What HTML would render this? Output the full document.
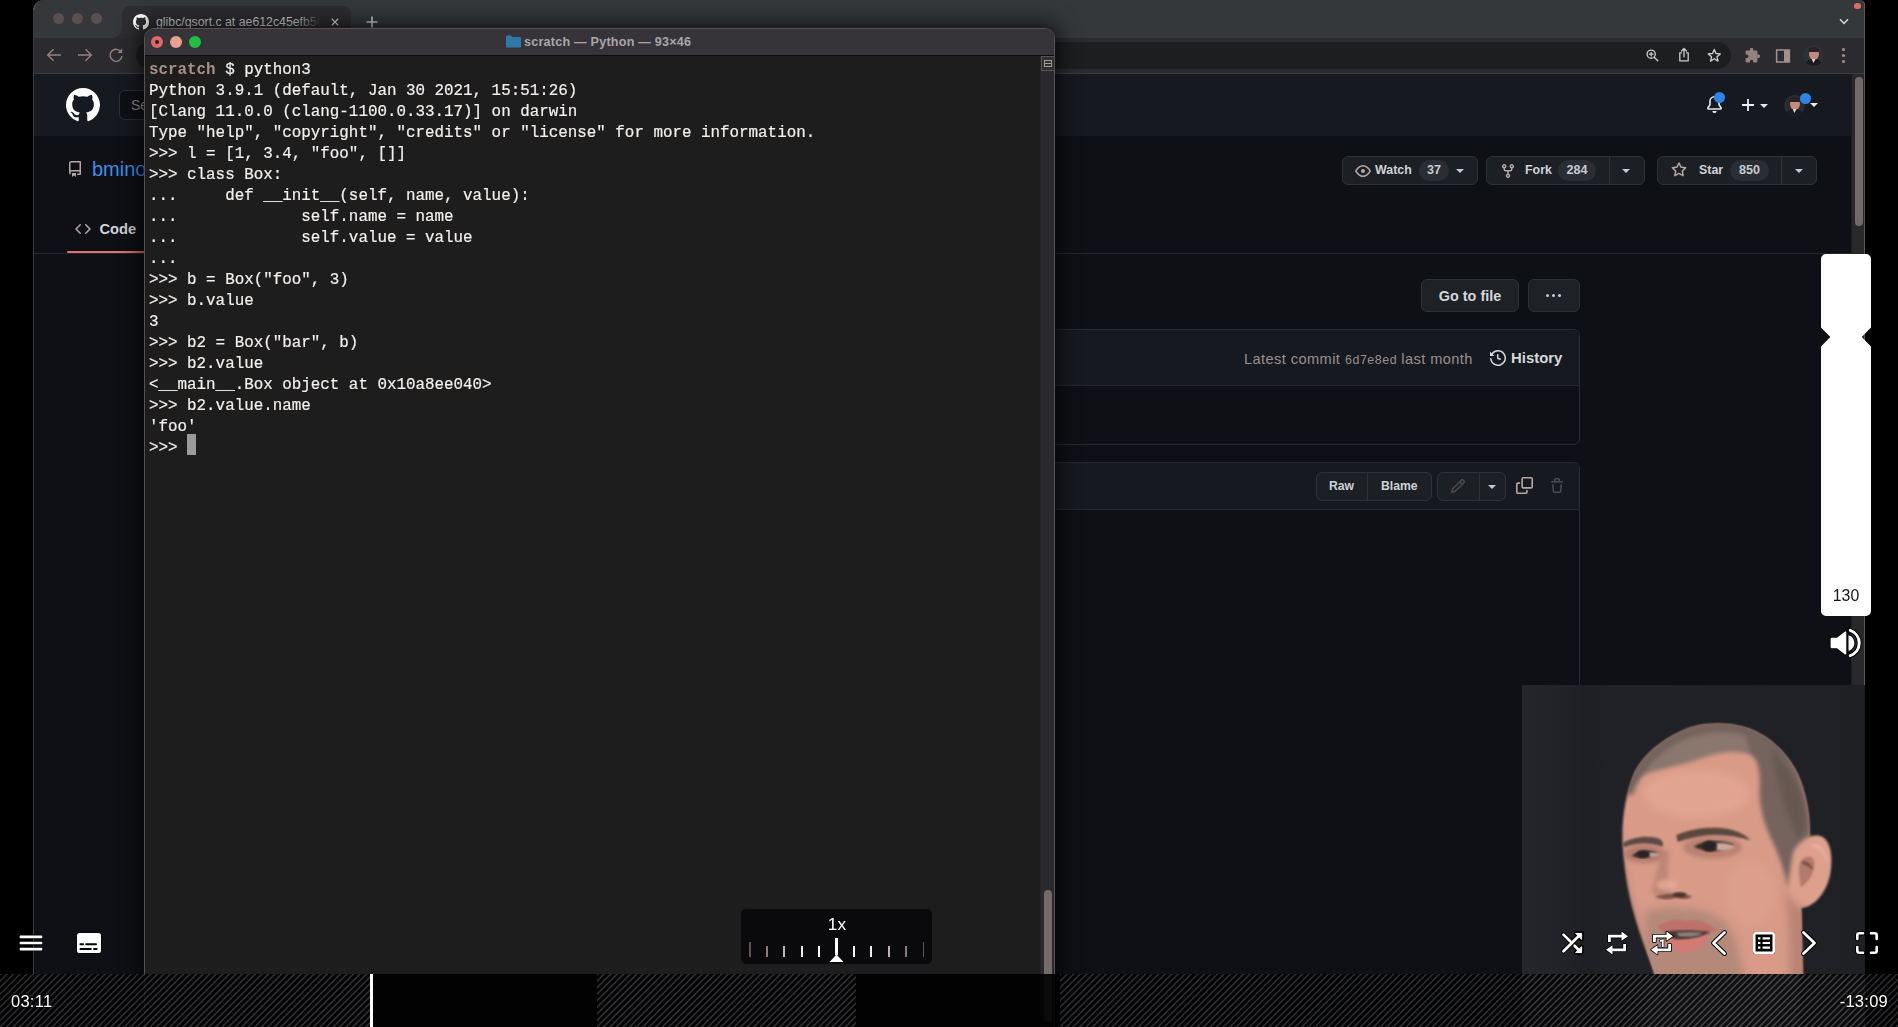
<!DOCTYPE html>
<html lang="en">
<head>
<meta charset="utf-8">
<title>Player</title>
<style>
*{box-sizing:border-box;margin:0;padding:0}
html,body{width:1898px;height:1027px;overflow:hidden;background:#000}
body{position:relative;font-family:"Liberation Sans",sans-serif;color:#fff}
.abs,#video div,#video svg,#video span.a,#ov div,#ov svg{position:absolute}
#video{position:absolute;left:0;top:0;width:1865px;height:1027px;background:#000;overflow:hidden}
#ov{position:absolute;left:0;top:0;width:1898px;height:1027px}
/* chrome */
#tabbar{left:33px;top:0;width:1832px;height:38px;background:#35383b;border-radius:11px 5px 0 0;border-left:1px solid #6f6463;border-right:1px solid #6f6463}
#tab{left:122px;top:6px;width:229px;height:32px;background:#2d2d31;border-radius:8px 8px 0 0}
#toolbar{left:33px;top:38px;width:1832px;height:36px;background:#2b2b2f;border-bottom:1px solid #3b3d41}
.dot{width:11px;height:11px;border-radius:50%}
#omni{left:136px;top:42px;width:1595px;height:27px;border-radius:13.5px;background:#1d1e20}
.cic{fill:none;stroke:#c9cbce;stroke-width:1.5;stroke-linecap:round;stroke-linejoin:round}
/* github */
#ghhead{left:33px;top:74px;width:1818px;height:62px;background:#16191f}
#ghbody{left:33px;top:136px;width:1818px;height:891px;background:#0f1015}
#vscroll{left:1851px;top:74px;width:14px;height:953px;background:#29292c;border-left:1px solid #1d1d20}
#vthumb{left:3px;top:3px;width:8px;height:149px;border-radius:4px;background:#74696a}
.btn{height:29px;background:#1c1f24;border:1px solid #2e3136;border-radius:6px;color:#c6cbd1;font-size:12px;font-weight:bold;line-height:27px;white-space:nowrap}
.cnt{background:#2a2d33;border-radius:10.5px;height:21px;font-size:12.6px;line-height:21px;text-align:center;color:#c6cbd1;font-weight:bold}
.gi{fill:#b5a7a4}
.caret{width:0;height:0;border-left:4px solid transparent;border-right:4px solid transparent;border-top:4px solid #c6cbd1}
/* terminal */
#term{left:144px;top:28px;width:911px;height:1010px;background:#1d1d1d;border:1px solid #5a5151;border-radius:10px 10px 0 0;overflow:hidden;box-shadow:0 0 20px 6px rgba(0,0,0,.6)}
#ttitle{left:0;top:0;width:100%;height:27px;background:#363438;border-bottom:1px solid #0c0c0c}
#ttext{left:379px;top:0;font-size:12.6px;letter-spacing:.22px;line-height:26px;font-weight:bold;color:#a9a6aa;white-space:nowrap}
#tbody{left:4px;top:31px;-webkit-text-stroke:.2px #f3f0ee;will-change:transform;font-family:"Liberation Mono",monospace;font-size:15.87px;line-height:21px;white-space:pre;color:#f3f0ee}
#tscroll{right:0;top:27px;width:14px;height:985px;background:#2a292d;border-left:1px solid #252527}
/* overlay */
#timeline{left:0;top:974px;width:1898px;height:53px}
.blk{top:0;height:53px;background:rgba(0,0,0,.9)}
.hatch{top:0;height:53px;background:repeating-linear-gradient(135deg,rgba(48,49,52,.84) 0,rgba(48,49,52,.84) .9px,rgba(0,0,0,.9) 1.7px,rgba(0,0,0,.9) 3.82px,rgba(48,49,52,.84) 4.62px)}
.time{top:17px;font-size:16.5px;letter-spacing:.25px;line-height:20px;color:#fff;white-space:nowrap;text-shadow:0 0 2px #000,0 0 3px #000,0 0 4px #000}
#vol{left:1821px;top:254px;width:50px;height:362px}
#speed{left:741px;top:909px;width:191px;height:55px;background:#0a0a0c;border-radius:5px}
#cam{left:1522px;top:685px;width:343px;height:342px;background:linear-gradient(90deg,#25262b 0,#212227 14%,#1e1f23 19%,#212227 26%,#202126 60%,#1f2024 100%);overflow:hidden}
.oi{fill:#fff;stroke:#000;stroke-width:1.6;paint-order:stroke;stroke-linejoin:round}
</style>
</head>
<body>
<div id="video">
  <div id="tabbar"></div>
  <div class="dot" style="left:53px;top:13px;background:#5b504f"></div>
  <div class="dot" style="left:72px;top:13px;background:#5b504f"></div>
  <div class="dot" style="left:91px;top:13px;background:#5b504f"></div>
  <div id="tab"></div>
  <div style="left:112px;top:28px;width:10px;height:10px;background:radial-gradient(circle at 0 0,#35383b 9.5px,#2d2d31 10px)"></div>
  <div style="left:351px;top:28px;width:10px;height:10px;background:radial-gradient(circle at 100% 0,#35383b 9.5px,#2d2d31 10px)"></div>
  <svg style="left:132.500px;top:14px" width="16" height="16" viewBox="0 0 16 16"><path fill="#fff" d="M8 0C3.58 0 0 3.58 0 8c0 3.54 2.29 6.53 5.47 7.59.4.07.55-.17.55-.38 0-.19-.01-.82-.01-1.49-2.01.37-2.53-.49-2.69-.94-.09-.23-.48-.94-.82-1.13-.28-.15-.68-.52-.01-.53.63-.01 1.08.58 1.23.82.72 1.21 1.87.87 2.33.66.07-.52.28-.87.51-1.07-1.78-.2-3.64-.89-3.64-3.95 0-.87.31-1.59.82-2.15-.08-.2-.36-1.02.08-2.12 0 0 .67-.21 2.2.82.64-.18 1.32-.27 2-.27s1.36.09 2 .27c1.53-1.04 2.2-.82 2.2-.82.44 1.1.16 1.92.08 2.12.51.56.82 1.27.82 2.15 0 3.07-1.87 3.75-3.65 3.95.29.25.54.73.54 1.48 0 1.07-.01 1.93-.01 2.2 0 .21.15.46.55.38A8.01 8.01 0 0 0 16 8c0-4.42-3.58-8-8-8z"/></svg>
  <div style="left:156px;top:14px;width:166px;height:17px;overflow:hidden;font-size:12.300px;line-height:17px;color:#d6d8dc;white-space:nowrap">glibc/qsort.c at ae612c45efb5e</div>
  <div style="left:296px;top:10px;width:30px;height:22px;background:linear-gradient(90deg,rgba(45,45,49,0),#2d2d31 85%)"></div>
  <svg style="left:331px;top:18px" width="8" height="8" viewBox="0 0 10 10"><path d="M1 1L9 9M9 1L1 9" stroke="#d5d7da" stroke-width="1.600" fill="none"/></svg>
  <svg style="left:366px;top:16px" width="12" height="12" viewBox="0 0 12 12"><path d="M6 .5V11.5M.5 6H11.5" stroke="#d5d7da" stroke-width="1.6" fill="none"/></svg>
  <svg style="left:1839px;top:18px" width="10" height="7" viewBox="0 0 10 7"><path d="M1 1.200L5 5.400L9 1.200" stroke="#d5d7da" stroke-width="1.500" fill="none"/></svg>
  <div style="left:1854px;top:2.500px;width:6.600px;height:6.600px;border-radius:50%;background:#e06a69"></div>
  <div id="toolbar"></div>
  <svg style="left:46px;top:48px" width="16" height="14" viewBox="0 0 16 14"><path d="M15 7H2M7.5 1.2L1.7 7L7.5 12.8" stroke="#93817f" stroke-width="1.4" fill="none"/></svg>
  <svg style="left:77px;top:48px" width="16" height="14" viewBox="0 0 16 14"><path d="M1 7H14M8.5 1.2L14.3 7L8.5 12.8" stroke="#93817f" stroke-width="1.4" fill="none"/></svg>
  <svg style="left:108px;top:47px" width="16" height="16" viewBox="0 0 16 16"><path d="M13.2 5.2A6 6 0 1 0 14 9.2" stroke="#93817f" stroke-width="1.4" fill="none"/><path d="M14.2 1.5V6H9.7z" fill="#93817f"/></svg>
  <div id="omni"></div>
  <svg style="left:1645px;top:48px" width="15" height="15" viewBox="0 0 17 17"><circle class="cic" cx="7" cy="7" r="4.6"/><path class="cic" d="M10.4 10.4L14.5 14.5M5 7H9M7 5V9"/></svg>
  <svg style="left:1677px;top:47px" width="14" height="16" viewBox="0 0 16 18"><path class="cic" d="M5 6.5H3.2V15.8H12.8V6.5H11M8 11V1.8M5.2 4.4L8 1.6L10.8 4.4"/></svg>
  <svg style="left:1707px;top:48px" width="14.500" height="14.500" viewBox="0 0 16 16"><path class="cic" d="M8 1.6L9.9 6.1L14.7 6.5L11 9.7L12.1 14.4L8 11.9L3.9 14.4L5 9.7L1.3 6.5L6.1 6.1Z"/></svg>
  <svg style="left:1744px;top:48px" width="16" height="16" viewBox="0 0 16 16"><path fill="#93817f" d="M6 1.2a1.6 1.6 0 0 1 3.2 0V2.6h3.2a1 1 0 0 1 1 1v3h1a1.7 1.7 0 0 1 0 3.4h-1v3.4a1 1 0 0 1-1 1H9.2v-1a1.6 1.6 0 0 0-3.2 0v1H2.6a1 1 0 0 1-1-1V10h1.2a1.7 1.7 0 0 0 0-3.4H1.6v-3a1 1 0 0 1 1-1H6z"/></svg>
  <svg style="left:1775px;top:48px" width="16" height="16" viewBox="0 0 16 16"><rect x="1.6" y="2" width="12.8" height="12" fill="none" stroke="#a3908d" stroke-width="1.5"/><rect x="9" y="2" width="5.4" height="12" fill="#a3908d"/></svg>
  <div style="left:1803px;top:45px;width:21px;height:21px;border-radius:50%;overflow:hidden;background:#2c3138"><div style="left:5.500px;top:3px;width:10px;height:12px;border-radius:50%;background:#c48a7c"></div><div style="left:5px;top:1.500px;width:11px;height:5px;border-radius:6px 6px 1px 1px;background:#2a2326"></div><div style="left:2px;top:14px;width:17px;height:9px;border-radius:7px 7px 0 0;background:#1a1b1f"></div><div style="left:8.500px;top:14px;width:4px;height:4px;background:#d8d4d4;clip-path:polygon(0 0,100% 0,50% 100%)"></div></div>
  <div style="left:1842px;top:48px;width:3px;height:3px;border-radius:50%;background:#a3908d;box-shadow:0 6px 0 #a3908d,0 12px 0 #a3908d"></div>
  <div id="ghhead"></div>
  <div id="ghbody"></div>
  <div id="vscroll"><div id="vthumb"></div></div>
  <svg style="left:66px;top:87.500px" width="34" height="34" viewBox="0 0 16 16"><path fill="#fff" d="M8 0C3.58 0 0 3.58 0 8c0 3.54 2.29 6.53 5.47 7.59.4.07.55-.17.55-.38 0-.19-.01-.82-.01-1.49-2.01.37-2.53-.49-2.69-.94-.09-.23-.48-.94-.82-1.13-.28-.15-.68-.52-.01-.53.63-.01 1.08.58 1.23.82.72 1.21 1.87.87 2.33.66.07-.52.28-.87.51-1.07-1.78-.2-3.64-.89-3.64-3.95 0-.87.31-1.59.82-2.15-.08-.2-.36-1.02.08-2.12 0 0 .67-.21 2.2.82.64-.18 1.32-.27 2-.27s1.36.09 2 .27c1.53-1.04 2.2-.82 2.2-.82.44 1.1.16 1.92.08 2.12.51.56.82 1.27.82 2.15 0 3.07-1.87 3.75-3.65 3.95.29.25.54.73.54 1.48 0 1.07-.01 1.93-.01 2.2 0 .21.15.46.55.38A8.01 8.01 0 0 0 16 8c0-4.42-3.580-8-8-8z"/></svg>
  <div style="left:119px;top:90px;width:272px;height:30px;border:1px solid #2c2f35;border-radius:6px;background:#0e1015;color:#9a8e8d;font-size:14px;line-height:28px;padding-left:11px">Search or jump to…</div>
  <svg style="left:1706px;top:96px" width="17" height="17" viewBox="0 0 16 16"><path fill="#e6e8eb" d="M8 16a2 2 0 001.985-1.750c.017-.137-.097-.250-.235-.250h-3.500c-.138 0-.252.113-.235.250A2 2 0 008 16zM8 1.500A3.500 3.500 0 004.500 5v2.947c0 .346-.102.683-.294.970l-1.703 2.556a.018.018 0 00-.003.010l.001.006c0 .002.002.004.004.006a.017.017 0 00.006.004l.007.001h10.964l.007-.001a.016.016 0 00.006-.004.016.016 0 00.004-.006l.001-.007a.017.017 0 00-.003-.010l-1.703-2.554a1.750 1.750 0 01-.294-.970V5A3.500 3.500 0 008 1.500zM3 5a5 5 0 0110 0v2.947c0 .050.015.098.042.139l1.703 2.555A1.518 1.518 0 0113.482 13H2.518a1.518 1.518 0 01-1.263-2.360l1.703-2.554A.250.250 0 003 7.947V5z"/></svg>
  <div style="left:1714px;top:92px;width:11px;height:11px;border-radius:50%;background:#2d84e6"></div>
  <svg style="left:1741px;top:98px" width="14" height="14" viewBox="0 0 14 14"><path d="M7 1V13M1 7H13" stroke="#f0f0f2" stroke-width="1.8" fill="none"/></svg>
  <div class="caret" style="left:1760px;top:104px;border-top-color:#e6e8eb"></div>
  <div style="left:1784px;top:95px;width:21px;height:21px;border-radius:50%;overflow:hidden;background:#2a2c31"><div style="left:5.500px;top:3px;width:10px;height:12px;border-radius:50%;background:#c48a7c"></div><div style="left:5px;top:1.500px;width:11px;height:5px;border-radius:6px 6px 1px 1px;background:#2a2326"></div><div style="left:2px;top:14px;width:17px;height:9px;border-radius:7px 7px 0 0;background:#1a1b1f"></div><div style="left:8.500px;top:14px;width:4px;height:4px;background:#d8d4d4;clip-path:polygon(0 0,100% 0,50% 100%)"></div></div>
  <div style="left:1800px;top:93px;width:11px;height:11px;border-radius:50%;background:#2d84e6"></div>
  <div class="caret" style="left:1810px;top:103px;border-top-color:#e6e8eb"></div>
  <!-- repo head -->
  <svg style="left:67px;top:161px" width="16" height="16" viewBox="0 0 16 16"><path class="gi" fill-rule="evenodd" d="M2 2.500A2.500 2.500 0 014.500 0h8.750a.750.750 0 01.750.750v12.500a.750.750 0 01-.750.750h-2.500a.750.750 0 110-1.500h1.750v-2h-8a1 1 0 00-.714 1.700.750.750 0 01-1.072 1.050A2.495 2.495 0 012 11.500v-9zm10.500-1V9h-8c-.356 0-.694.074-1 .208V2.500a1 1 0 011-1h8zM5 12.250v3.250a.250.250 0 00.400.200l1.450-1.087a.250.250 0 01.300 0L8.600 15.700a.250.250 0 00.400-.200v-3.250a.250.250 0 00-.250-.250h-3.500a.250.250 0 00-.250.250z"/></svg>
  <div style="left:92px;top:156px;font-size:20px;line-height:26px;color:#3a8ee9;white-space:nowrap">bminor / glibc</div>
  <div class="btn" style="left:1342px;top:156px;width:136px"></div>
  <svg style="left:1355px;top:163px" width="16" height="16" viewBox="0 0 16 16"><path class="gi" fill-rule="evenodd" d="M1.679 7.932c.412-.621 1.242-1.750 2.366-2.717C5.175 4.242 6.527 3.500 8 3.500c1.473 0 2.824.742 3.955 1.715 1.124.967 1.954 2.096 2.366 2.717a.119.119 0 010 .136c-.412.621-1.242 1.750-2.366 2.717C10.825 11.758 9.473 12.500 8 12.500c-1.473 0-2.824-.742-3.955-1.715C2.920 9.818 2.090 8.690 1.679 8.068a.119.119 0 010-.136zM8 2c-1.981 0-3.670.992-4.933 2.078C1.797 5.169.880 6.423.430 7.100a1.619 1.619 0 000 1.798c.450.678 1.367 1.932 2.637 3.024C4.329 13.008 6.019 14 8 14c1.981 0 3.670-.992 4.933-2.078 1.270-1.091 2.187-2.345 2.637-3.023a1.619 1.619 0 000-1.798c-.450-.678-1.367-1.932-2.637-3.023C11.671 2.992 9.981 2 8 2zm0 8a2 2 0 100-4 2 2 0 000 4z"/></svg>
  <div style="left:1375px;top:162px;font-size:12.4px;line-height:17px;font-weight:bold;color:#cfd3d8">Watch</div>
  <div class="cnt" style="left:1419px;top:160px;width:30px">37</div>
  <div class="caret" style="left:1456px;top:169px"></div>
  <div class="btn" style="left:1486px;top:156px;width:159px"></div>
  <div style="left:1609px;top:157px;width:1px;height:27px;background:#2e3136"></div>
  <svg style="left:1500px;top:163px" width="16" height="16" viewBox="0 0 16 16"><path class="gi" fill-rule="evenodd" d="M5 3.250a.750.750 0 11-1.500 0 .750.750 0 011.500 0zm0 2.122a2.250 2.250 0 10-1.500 0v.878A2.250 2.250 0 005.750 8.500h1.500v2.128a2.251 2.251 0 101.500 0V8.500h1.500a2.250 2.250 0 002.250-2.250v-.878a2.250 2.250 0 10-1.500 0v.878a.750.750 0 01-.750.750h-4.500A.750.750 0 015 6.250v-.878zm3.750 7.378a.750.750 0 11-1.500 0 .750.750 0 011.500 0zm3-8.750a.750.750 0 100-1.500.750.750 0 000 1.500z"/></svg>
  <div style="left:1525px;top:162px;font-size:12.4px;line-height:17px;font-weight:bold;color:#cfd3d8">Fork</div>
  <div class="cnt" style="left:1558px;top:160px;width:38px">284</div>
  <div class="caret" style="left:1622px;top:169px"></div>
  <div class="btn" style="left:1657px;top:156px;width:160px"></div>
  <div style="left:1781px;top:157px;width:1px;height:27px;background:#2e3136"></div>
  <svg style="left:1671px;top:162px" width="16" height="16" viewBox="0 0 16 16"><path class="gi" fill-rule="evenodd" d="M8 .250a.750.750 0 01.673.418l1.882 3.815 4.210.612a.750.750 0 01.416 1.279l-3.046 2.970.719 4.192a.750.750 0 01-1.088.791L8 12.347l-3.766 1.980a.750.750 0 01-1.088-.790l.720-4.194L.818 6.374a.750.750 0 01.416-1.280l4.210-.611L7.327.668A.750.750 0 018 .250zm0 2.445L6.615 5.500a.750.750 0 01-.564.410l-3.097.450 2.240 2.184a.750.750 0 01.216.664l-.528 3.084 2.769-1.456a.750.750 0 01.698 0l2.770 1.456-.530-3.084a.750.750 0 01.216-.664l2.240-2.183-3.096-.450a.750.750 0 01-.564-.410L8 2.694v.001z"/></svg>
  <div style="left:1699px;top:162px;font-size:12.4px;line-height:17px;font-weight:bold;color:#cfd3d8">Star</div>
  <div class="cnt" style="left:1730px;top:160px;width:39px">850</div>
  <div class="caret" style="left:1795px;top:169px"></div>
  <!-- tabs -->
  <svg style="left:75px;top:221px" width="16" height="16" viewBox="0 0 16 16"><path class="gi" fill-rule="evenodd" d="M4.720 3.220a.750.750 0 011.060 1.060L2.060 8l3.720 3.720a.750.750 0 11-1.060 1.060L.470 8.530a.750.750 0 010-1.060l4.250-4.250zm6.560 0a.750.750 0 10-1.060 1.060L13.940 8l-3.720 3.720a.750.750 0 101.060 1.060l4.250-4.250a.750.750 0 000-1.060l-4.250-4.250z"/></svg>
  <div style="left:99.500px;top:219px;font-size:14.7px;line-height:20px;font-weight:bold;color:#d0d3d8">Code</div>
  <div style="left:33px;top:253px;width:1818px;height:1px;background:#24272d"></div>
  <div style="left:67px;top:251px;width:90px;height:2px;background:#e2716d;border-radius:2px"></div>
  <!-- file nav -->
  <div class="btn" style="left:1421px;top:279px;width:98px;height:33px;font-size:14.4px;line-height:33px;text-align:center;color:#d3d6db;background:#1e2126">Go to file</div>
  <div class="btn" style="left:1528px;top:279px;width:52px;height:33px;background:#1e2126"></div>
  <div style="left:1546px;top:294px;width:3px;height:3px;border-radius:50%;background:#c6cbd1;box-shadow:6px 0 0 #c6cbd1,12px 0 0 #c6cbd1"></div>
  <!-- commit box -->
  <div style="left:200px;top:329px;width:1380px;height:116px;border:1px solid #272a30;border-radius:6px;background:#0e1015"></div>
  <div style="left:201px;top:330px;width:1378px;height:56px;background:#16191f;border-bottom:1px solid #24272d;border-radius:5px 5px 0 0"></div>
  <div style="left:1244px;top:349px;font-size:14.6px;letter-spacing:.42px;line-height:20px;color:#9b908f;white-space:nowrap">Latest commit <span style="font-family:'Liberation Mono',monospace;font-size:12.4px;letter-spacing:0">6d7e8ed</span> last month</div>
  <svg style="left:1490px;top:350px" width="16" height="16" viewBox="0 0 16 16"><path fill="#d6d9de" fill-rule="evenodd" d="M1.643 3.143L.427 1.927A.250.250 0 000 2.104V5.750c0 .138.112.250.250.250h3.646a.250.250 0 00.177-.427L2.715 4.215a6.500 6.500 0 11-1.180 4.458.750.750 0 10-1.493.154 8.001 8.001 0 101.600-5.684zM7.750 4a.750.750 0 01.750.750v2.992l2.028.812a.750.750 0 01-.557 1.392l-2.500-1A.750.750 0 017 8.250v-3.500A.750.750 0 017.750 4z"/></svg>
  <div style="left:1511px;top:348px;font-size:14.9px;line-height:20px;font-weight:bold;color:#d6d9de">History</div>
  <!-- file box -->
  <div style="left:200px;top:462px;width:1380px;height:600px;border:1px solid #272a30;border-radius:6px;background:#0e1015"></div>
  <div style="left:201px;top:463px;width:1378px;height:47px;background:#16191f;border-bottom:1px solid #24272d;border-radius:5px 5px 0 0"></div>
  <div class="btn" style="left:1316px;top:472px;width:116px"></div>
  <div style="left:1367px;top:473px;width:1px;height:27px;background:#2e3136"></div>
  <div style="left:1329px;top:478px;font-size:12.2px;line-height:17px;font-weight:bold;color:#cfd3d8">Raw</div>
  <div style="left:1381px;top:478px;font-size:12.2px;line-height:17px;font-weight:bold;color:#cfd3d8">Blame</div>
  <div class="btn" style="left:1437px;top:472px;width:69px"></div>
  <div style="left:1479px;top:473px;width:1px;height:27px;background:#2e3136"></div>
  <svg style="left:1450px;top:478px" width="16" height="16" viewBox="0 0 16 16"><path fill="#4e4a4d" fill-rule="evenodd" d="M11.013 1.427a1.750 1.750 0 012.474 0l1.086 1.086a1.750 1.750 0 010 2.474l-8.610 8.610c-.210.210-.470.364-.756.445l-3.251.930a.750.750 0 01-.927-.928l.929-3.250a1.750 1.750 0 01.445-.758l8.610-8.610zm1.414 1.060a.250.250 0 00-.354 0L10.811 3.750l1.439 1.440 1.263-1.263a.250.250 0 000-.354l-1.086-1.086zM11.189 6.250L9.750 4.810l-6.286 6.287a.250.250 0 00-.064.108l-.558 1.953 1.953-.558a.249.249 0 00.108-.064l6.286-6.286z"/></svg>
  <div class="caret" style="left:1488px;top:485px"></div>
  <svg style="left:1516px;top:477px" width="17" height="17" viewBox="0 0 16 16"><path class="gi" fill-rule="evenodd" d="M0 6.750C0 5.784.784 5 1.750 5h1.500a.750.750 0 010 1.500h-1.500a.250.250 0 00-.250.250v7.500c0 .138.112.250.250.250h7.500a.250.250 0 00.250-.250v-1.500a.750.750 0 011.500 0v1.500A1.750 1.750 0 019.250 16h-7.500A1.750 1.750 0 010 14.250v-7.500z"/><path class="gi" fill-rule="evenodd" d="M5 1.750C5 .784 5.784 0 6.750 0h7.500C15.216 0 16 .784 16 1.750v7.500A1.750 1.750 0 0114.250 11h-7.500A1.750 1.750 0 015 9.250v-7.500zm1.750-.250a.250.250 0 00-.250.250v7.500c0 .138.112.250.250.250h7.500a.250.250 0 00.250-.250v-7.500a.250.250 0 00-.250-.250h-7.500z"/></svg>
  <svg style="left:1549px;top:478px" width="16" height="16" viewBox="0 0 16 16"><path fill="#4e4a4d" fill-rule="evenodd" d="M6.500 1.750a.250.250 0 01.250-.250h2.500a.250.250 0 01.250.250V3h-3V1.750zm4.500 0V3h2.250a.750.750 0 010 1.500H2.750a.750.750 0 010-1.500H5V1.750C5 .784 5.784 0 6.750 0h2.500C10.216 0 11 .784 11 1.750zM4.496 6.675a.750.750 0 10-1.492.150l.660 6.600A1.750 1.750 0 005.405 15h5.190c.900 0 1.652-.681 1.741-1.576l.660-6.600a.750.750 0 00-1.492-.149l-.660 6.600a.250.250 0 01-.249.225h-5.190a.250.250 0 01-.249-.225l-.660-6.600z"/></svg>
  <div id="term">
    <div id="ttitle"></div>
    <div style="left:6px;top:7px;width:12px;height:12px;border-radius:50%;background:#dd6866"></div>
    <div style="left:10px;top:11px;width:4px;height:4px;border-radius:50%;background:#3a1616"></div>
    <div style="left:25px;top:7px;width:12px;height:12px;border-radius:50%;background:#e9a08c"></div>
    <div style="left:44px;top:7px;width:12px;height:12px;border-radius:50%;background:#1fbf3f"></div>
    <svg style="left:361px;top:6px" width="15" height="13" viewBox="0 0 15 13"><path fill="#2f78a8" d="M0 1.600A1.200 1.200 0 011.200.400h3.600l1.500 1.500h7.500A1.200 1.200 0 0115 3.100v8.300a1.200 1.200 0 01-1.200 1.200H1.200A1.200 1.200 0 010 11.400z"/></svg>
    <div id="ttext">scratch — Python — 93×46</div>
    <div id="tbody"><span style="color:#a88f89;font-weight:bold;-webkit-text-stroke:0">scratch</span> $ python3
Python 3.9.1 (default, Jan 30 2021, 15:51:26)
[Clang 11.0.0 (clang-1100.0.33.17)] on darwin
Type "help", "copyright", "credits" or "license" for more information.
&gt;&gt;&gt; l = [1, 3.4, "foo", []]
&gt;&gt;&gt; class Box:
...     def __init__(self, name, value):
...             self.name = name
...             self.value = value
...
&gt;&gt;&gt; b = Box("foo", 3)
&gt;&gt;&gt; b.value
3
&gt;&gt;&gt; b2 = Box("bar", b)
&gt;&gt;&gt; b2.value
&lt;__main__.Box object at 0x10a8ee040&gt;
&gt;&gt;&gt; b2.value.name
'foo'
&gt;&gt;&gt; </div>
    <div style="left:42px;top:405px;width:9px;height:21px;background:#9b9b9b"></div>
    <div id="tscroll"></div>
    <div style="left:896px;top:27px;width:14px;height:15px;background:#2e2f31;border:1px solid #5d5353"></div>
    <div style="left:899px;top:31px;width:8px;height:7px;border:1px solid #a89a98;background:linear-gradient(#a89a98,#a89a98) 0 2px/100% 1px no-repeat"></div>
    <div style="left:899px;top:861px;width:8px;height:132px;border-radius:4px;background:#766a69"></div>
  </div>
  <div id="cam"></div>
  <svg style="left:1600px;top:700px" width="260" height="327" viewBox="0 0 971 1221">
    <defs>
      <filter id="b3" x="-10%" y="-10%" width="120%" height="120%"><feGaussianBlur stdDeviation="3"/></filter>
      <filter id="b8" x="-20%" y="-20%" width="140%" height="140%"><feGaussianBlur stdDeviation="8"/></filter>
      <filter id="b16" x="-30%" y="-30%" width="160%" height="160%"><feGaussianBlur stdDeviation="16"/></filter>
      <clipPath id="hc"><path d="M205 1027C180 950 150 880 128 800C105 720 88 620 84 520C82 440 96 350 130 270C165 200 240 140 330 105C400 82 490 84 560 108C640 140 700 200 740 280C770 350 786 430 782 500C830 490 870 540 864 620C858 700 820 770 752 778L762 1221L214 1221Z"/></clipPath>
    </defs>
    <!-- neck / ear behind -->
    <g filter="url(#b3)">
      <path fill="#d99b88" d="M205 1027C180 950 150 880 128 800C105 720 88 620 84 520C82 440 96 350 130 270C165 200 240 140 330 105C400 82 490 84 560 108C640 140 700 200 740 280C770 350 786 430 782 520L752 778L762 1221L214 1221Z"/>
      <path fill="#dda08d" d="M705 640C700 560 760 500 815 506C860 512 872 580 860 650C846 720 800 775 750 776C715 770 708 700 705 640Z"/>
    </g>
    <g clip-path="url(#hc)">
      <!-- hair top (stubble) -->
      <path filter="url(#b8)" fill="#8a776e" d="M84 400C96 310 150 215 240 150C330 95 450 70 560 100C640 125 700 180 745 280L640 300C625 250 600 215 563 204C520 192 480 192 440 200C400 210 360 224 320 236C270 250 210 262 153 282C125 310 100 350 84 400Z"/>
      <path filter="url(#b8)" fill="none" stroke="#6c5c57" stroke-width="50" opacity=".75" d="M100 350C116 285 165 215 240 160C330 100 450 76 560 110C620 130 670 170 700 210"/>
      <!-- hair side -->
      <path filter="url(#b8)" fill="#75645d" d="M540 100C640 130 710 210 745 290C775 360 790 440 782 510C760 520 735 540 720 570C712 620 706 660 700 700C690 640 670 580 640 520C612 460 594 400 596 330C600 270 590 220 563 200C550 160 545 130 540 100Z"/>
      <path filter="url(#b8)" fill="#64564f" opacity=".8" d="M640 190C700 240 750 330 765 420C770 470 765 500 740 520C720 470 690 400 670 330C660 280 650 230 640 190Z"/>
      <!-- forehead highlight -->
      <ellipse filter="url(#b16)" cx="360" cy="350" rx="200" ry="90" fill="#e3a793" opacity=".8"/>
      <!-- left edge shadow -->
      <path filter="url(#b16)" fill="#8e675c" opacity=".7" d="M70 500C80 650 120 800 200 1027L215 1221H150C100 900 60 700 60 500Z"/>
      <!-- eye sockets -->
      <ellipse filter="url(#b8)" cx="165" cy="575" rx="75" ry="35" fill="#a87668" opacity=".8"/>
      <ellipse filter="url(#b8)" cx="420" cy="550" rx="110" ry="42" fill="#b07c6d" opacity=".8"/>
      <!-- brows -->
      <path filter="url(#b3)" fill="#5d4a45" d="M84 535C120 512 170 505 215 515C235 522 240 540 232 548C190 530 130 532 90 550Z"/>
      <path filter="url(#b3)" fill="#5a4641" d="M285 505C340 478 420 470 480 482C520 492 550 508 562 524C520 510 470 502 420 504C370 506 320 520 290 530Z"/>
      <!-- eyes -->
      <path filter="url(#b3)" fill="#3d302e" d="M118 582C140 560 185 556 215 572C190 592 150 596 118 582Z"/>
      <path filter="url(#b3)" fill="#cfa79b" d="M185 570C200 568 215 572 222 578C210 586 195 588 185 584Z"/>
      <path filter="url(#b3)" fill="#3a2d2b" d="M350 548C385 522 450 520 500 540C470 568 400 574 350 548Z"/>
      <path filter="url(#b3)" fill="#cfa79b" d="M435 535C460 532 490 538 505 548C485 562 455 566 435 560Z"/>
      <ellipse filter="url(#b3)" cx="408" cy="546" rx="26" ry="20" fill="#2c2322"/>
      <ellipse filter="url(#b3)" cx="160" cy="576" rx="22" ry="14" fill="#2c2322"/>
      <!-- nose -->
      <path filter="url(#b8)" fill="#b78172" opacity=".8" d="M230 560C220 620 200 680 195 720C215 740 250 745 270 735C250 690 250 620 260 565Z"/>
      <path filter="url(#b3)" fill="#7d5349" d="M205 735C240 722 300 715 345 735C320 748 300 742 285 738C260 745 230 748 205 735Z"/>
      <ellipse filter="url(#b3)" cx="298" cy="727" rx="26" ry="9" fill="#4a3330"/>
      <ellipse filter="url(#b8)" cx="250" cy="690" rx="40" ry="22" fill="#e6ab98" opacity=".8"/>
      <!-- beard shadow -->
      <path filter="url(#b16)" fill="#ae8678" opacity=".85" d="M170 790C260 760 400 770 470 830C520 900 540 1000 560 1221H200C170 950 160 860 170 790Z"/>
      <!-- mouth -->
      <path filter="url(#b3)" fill="#bd716b" d="M215 845C250 822 290 815 320 825C360 815 400 830 440 862C400 872 300 872 250 868C230 862 220 855 215 845Z"/>
      <path filter="url(#b3)" fill="#4a3532" d="M240 866C290 858 360 860 410 866C390 892 330 900 280 894C260 888 245 878 240 866Z"/>
      <path filter="url(#b3)" fill="#8f8782" d="M285 870C315 866 355 866 385 870C375 882 330 886 295 882Z"/>
      <path filter="url(#b3)" fill="#d27a73" d="M250 892C290 900 350 896 405 872C400 910 360 940 310 944C275 940 255 920 250 892Z"/>
      <!-- cheek & jaw -->
      <ellipse filter="url(#b16)" cx="560" cy="720" rx="90" ry="120" fill="#dfa28f" opacity=".7"/>
      <path filter="url(#b16)" fill="#b07e6f" opacity=".8" d="M690 700C700 800 720 900 700 1221H770V780C730 770 705 740 690 700Z"/>
    </g>
    <!-- ear details -->
    <g filter="url(#b3)">
      <path fill="#b3796c" d="M745 610C760 580 790 575 800 600C805 640 780 680 750 700C745 670 740 640 745 610Z"/>
      <path fill="#7b5048" d="M755 600C775 600 795 615 795 635C785 625 768 615 755 612Z"/>
      <path fill="#e9b2a0" d="M790 540C820 530 850 560 848 610C840 580 820 555 790 548Z" opacity=".8"/>
    </g>
  </svg>
  <div style="left:1522px;top:975px;width:343px;height:52px;background:linear-gradient(90deg,#4a4a4d 0,#5a5a5c 30%,#8a8a8c 37%,#969698 80%,#707073 82%,#6c6c6f 100%)"></div>
  <div style="left:0;top:0;width:33px;height:1027px;background:#000"></div>
  <div style="left:33px;top:10px;width:1px;height:1017px;background:#3b3b3f"></div>
  <div style="left:1864px;top:5px;width:1px;height:680px;background:#5d5554"></div>
</div>
<div id="ov">
<svg id="vol" viewBox="0 0 50 362"><path fill="#fff" d="M5 0H45a5 5 0 015 5V73.500L40.700 83L50 92.500V357a5 5 0 01-5 5H5a5 5 0 01-5-5V92.500L9.300 83L0 73.500V5a5 5 0 015-5z"/><text x="25" y="347.300" text-anchor="middle" font-family="Liberation Sans, sans-serif" font-size="15.800" fill="#151515">130</text></svg>
<svg style="left:1829px;top:627px" width="34" height="32" viewBox="0 0 34 32"><path class="oi" d="M2.800 10.700H8L16 4.600a.8.800 0 011.300.600V26.800a.8.800 0 01-1.300.600L8 21.300H2.800a1.200 1.200 0 01-1.200-1.200V11.900a1.200 1.200 0 011.200-1.200z"/><path class="oi" d="M19.500 8.200C23 9 25.300 12.200 25.300 16S23 23 19.500 23.800z"/><path d="M21.300 3.300A13.500 13.500 0 0121.300 28.700" fill="none" stroke="#000" stroke-width="4.800" stroke-linecap="round"/><path d="M21.300 3.300A13.500 13.500 0 0121.300 28.700" fill="none" stroke="#fff" stroke-width="3" stroke-linecap="round"/></svg>
<div id="speed"></div>
<div style="left:819px;top:913px;width:36px;text-align:center;font-size:17.300px;line-height:22px;color:#fff">1x</div>
<div style="left:749px;top:942px;width:1.500px;height:15px;background:#5e5352"></div>
<div style="left:766px;top:945.500px;width:2px;height:11.500px;background:#8d7b79"></div>
<div style="left:783.300px;top:945.500px;width:2px;height:11.500px;background:#bfb3b2"></div>
<div style="left:800.700px;top:945.500px;width:2px;height:11.500px;background:#efebeb"></div>
<div style="left:818px;top:945.500px;width:2px;height:11.500px;background:#fff"></div>
<div style="left:835px;top:938px;width:3px;height:17px;background:#fff"></div>
<div style="left:852.900px;top:945.500px;width:2px;height:11.500px;background:#fff"></div>
<div style="left:870.200px;top:945.500px;width:2px;height:11.500px;background:#efebeb"></div>
<div style="left:887.500px;top:945.500px;width:2px;height:11.500px;background:#bfb3b2"></div>
<div style="left:904.800px;top:945.500px;width:2px;height:11.500px;background:#8d7b79"></div>
<div style="left:922.500px;top:942px;width:1.500px;height:15px;background:#5e5352"></div>
<svg style="left:829px;top:954px" width="15" height="8" viewBox="0 0 15 8"><path fill="#fff" d="M7.500 .500L14.500 8H.500z"/></svg>
<!-- left icons -->
<svg style="left:18px;top:933px" width="26" height="20" viewBox="0 0 26 20"><path class="oi" d="M2.300 2.600h21.400a.6.600 0 01.600.600v1.400a.6.600 0 01-.600.600H2.300a.6.600 0 01-.600-.600V3.200a.6.600 0 01.600-.600zM2.300 8.700h21.400a.6.600 0 01.600.600v1.400a.6.600 0 01-.600.600H2.300a.6.600 0 01-.600-.600V9.300a.6.600 0 01.600-.600zM2.300 14.800h21.400a.6.600 0 01.600.600v1.400a.6.600 0 01-.600.600H2.300a.6.600 0 01-.600-.600v-1.400a.6.600 0 01.600-.600z"/></svg>
<svg style="left:75px;top:931px" width="28" height="24" viewBox="0 0 28 24"><rect class="oi" x="2" y="2" width="24" height="20" rx="2.600"/><path d="M5.500 13.200h2.600M11.200 13.200h9.800M5.500 18h10.200M19.200 18h2.400" stroke="#000" stroke-width="2.100" stroke-linecap="round" fill="none"/></svg>
<!-- right icons -->
<svg style="left:1560px;top:931px" width="24" height="24" viewBox="0 0 24 24"><g fill="none" stroke="#000" stroke-width="4.600" stroke-linecap="round" stroke-linejoin="round"><path d="M3.500 20.200L19 4.800M3.500 3.600L10.200 10.300M14.600 14.800L19 19.200"/><path d="M16 2.400H21.600V8zM16 21.600H21.600V16z" fill="#000"/></g><g fill="none" stroke="#fff" stroke-width="2.700" stroke-linecap="round" stroke-linejoin="round"><path d="M3.500 20.200L19 4.800M3.500 3.600L10.200 10.300M14.600 14.800L19 19.200"/><path d="M16 2.400H21.600V8zM16 21.600H21.600V16z" fill="#fff" stroke-width="1"/></g></svg>
<svg style="left:1604px;top:930px" width="26" height="26" viewBox="0 0 26 26"><path class="oi" d="M4 4.800H17.500V1.600L24 6.200L17.500 10.800V7.600H6.800V12H4zM22 21.200H8.500V24.400L2 19.800L8.500 15.200V18.400H19.200V14H22z"/></svg>
<svg style="left:1649px;top:930px" width="26" height="26" viewBox="0 0 26 26"><path class="oi" d="M4 4.800H17.500V1.600L24 6.200L17.500 10.800V7.600H6.800V12H4zM22 21.200H8.500V24.400L2 19.800L8.500 15.200V18.400H19.200V14H22z"/><path class="oi" d="M11 10.200L13.400 9.300H14.700V17H12.900V11.400L11 12z" style="stroke-width:1.200"/></svg>
<svg style="left:1708px;top:929px" width="22" height="28" viewBox="0 0 22 28"><path d="M16.500 3.500L5.500 14L16.500 24.500" fill="none" stroke="#000" stroke-width="4.800" stroke-linecap="round" stroke-linejoin="round"/><path d="M16.500 3.500L5.500 14L16.500 24.500" fill="none" stroke="#fff" stroke-width="2.800" stroke-linecap="round" stroke-linejoin="round"/></svg>
<svg style="left:1751px;top:930px" width="26" height="26" viewBox="0 0 26 26"><rect x="2" y="2" width="22" height="22" rx="1.500" fill="#000"/><rect x="3.300" y="3.300" width="19.400" height="19.400" rx="1" fill="none" stroke="#fff" stroke-width="2.500"/><path d="M7 8.300h2.400M7 13h2.400M7 17.700h2.400M11.600 8.300H19M11.600 13H19M11.600 17.700H19" stroke="#fff" stroke-width="2.200" fill="none"/></svg>
<svg style="left:1798px;top:929px" width="22" height="28" viewBox="0 0 22 28"><path d="M5.500 3.500L16.500 14L5.500 24.500" fill="none" stroke="#000" stroke-width="4.800" stroke-linecap="round" stroke-linejoin="round"/><path d="M5.500 3.500L16.500 14L5.500 24.500" fill="none" stroke="#fff" stroke-width="2.800" stroke-linecap="round" stroke-linejoin="round"/></svg>
<svg style="left:1854px;top:930px" width="26" height="26" viewBox="0 0 26 26"><path d="M3.300 9V5.300a2 2 0 012-2H9M17 3.300h3.700a2 2 0 012 2V9M22.700 17v3.700a2 2 0 01-2 2H17M9 22.700H5.300a2 2 0 01-2-2V17" fill="none" stroke="#000" stroke-width="4.600" stroke-linecap="round"/><path d="M3.300 9V5.300a2 2 0 012-2H9M17 3.300h3.700a2 2 0 012 2V9M22.700 17v3.700a2 2 0 01-2 2H17M9 22.700H5.300a2 2 0 01-2-2V17" fill="none" stroke="#fff" stroke-width="2.600" stroke-linecap="round"/></svg>
<div id="timeline">
  <div class="hatch" style="left:0;width:371px"></div>
  <div class="blk" style="left:371px;width:226px"></div>
  <div class="hatch" style="left:597px;width:259px"></div>
  <div class="blk" style="left:856px;width:204px"></div>
  <div class="hatch" style="left:1060px;width:838px"></div>
  <div style="left:370px;top:0;width:3px;height:53px;background:#fff"></div>
  <div class="time" style="left:11px">03:11</div>
  <div class="time" style="right:10px">-13:09</div>
</div>
</div>
</body>
</html>
